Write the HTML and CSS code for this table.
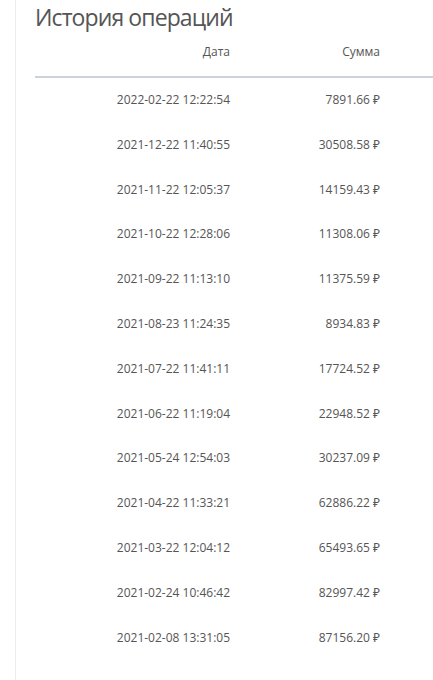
FILE: index.html
```html
<!DOCTYPE html>
<html lang="ru">
<head>
<meta charset="utf-8">
<link rel="stylesheet" href="styles.css">
</head>
<body>
<div class="page">
  <div class="content">
    <h1 class="title">История операций</h1>
    <table class="ops">
      <thead>
        <tr><th class="c-date">Дата</th><th class="c-sum">Сумма</th><th class="c-rest"></th></tr>
      </thead>
      <tbody>
        <tr><td class="c-date">2022-02-22 12:22:54</td><td class="c-sum">7891.66 ₽</td><td></td></tr>
        <tr><td class="c-date">2021-12-22 11:40:55</td><td class="c-sum">30508.58 ₽</td><td></td></tr>
        <tr><td class="c-date">2021-11-22 12:05:37</td><td class="c-sum">14159.43 ₽</td><td></td></tr>
        <tr><td class="c-date">2021-10-22 12:28:06</td><td class="c-sum">11308.06 ₽</td><td></td></tr>
        <tr><td class="c-date">2021-09-22 11:13:10</td><td class="c-sum">11375.59 ₽</td><td></td></tr>
        <tr><td class="c-date">2021-08-23 11:24:35</td><td class="c-sum">8934.83 ₽</td><td></td></tr>
        <tr><td class="c-date">2021-07-22 11:41:11</td><td class="c-sum">17724.52 ₽</td><td></td></tr>
        <tr><td class="c-date">2021-06-22 11:19:04</td><td class="c-sum">22948.52 ₽</td><td></td></tr>
        <tr><td class="c-date">2021-05-24 12:54:03</td><td class="c-sum">30237.09 ₽</td><td></td></tr>
        <tr><td class="c-date">2021-04-22 11:33:21</td><td class="c-sum">62886.22 ₽</td><td></td></tr>
        <tr><td class="c-date">2021-03-22 12:04:12</td><td class="c-sum">65493.65 ₽</td><td></td></tr>
        <tr><td class="c-date">2021-02-24 10:46:42</td><td class="c-sum">82997.42 ₽</td><td></td></tr>
        <tr><td class="c-date">2021-02-08 13:31:05</td><td class="c-sum">87156.20 ₽</td><td></td></tr>
      </tbody>
    </table>
  </div>
</div>
</body>
</html>
```
FILE: styles.css
```css
html, body {
  margin: 0;
  padding: 0;
  background: #fff;
}
body {
  font-family: "Open Sans", "Noto Sans", sans-serif;
  color: #555;
  overflow: hidden;
}
.page {
  padding-left: 15px;
  min-height: 680px;
}
.content {
  border-left: 1px solid #ececec;
  min-height: 680px;
  padding-left: 19px;
}
.title {
  margin: 0;
  padding-top: 2px;
  font-size: 23px;
  letter-spacing: -0.9px;
  font-weight: 400;
  line-height: 31px;
  color: #555;
}
.ops {
  border-collapse: collapse;
  width: 100%;
  margin-top: 5px;
  font-size: 12px;
}
.ops th {
  font-weight: 400;
  text-align: right;
  padding: 7px 0 17px;
  line-height: 14px;
  border-bottom: 2px solid #cad3dd;
}
.ops td {
  text-align: right;
  padding: 15px 0;
  line-height: 14.8px;
}
.c-date { width: 195px; }
.c-sum { width: 150px; }
```
